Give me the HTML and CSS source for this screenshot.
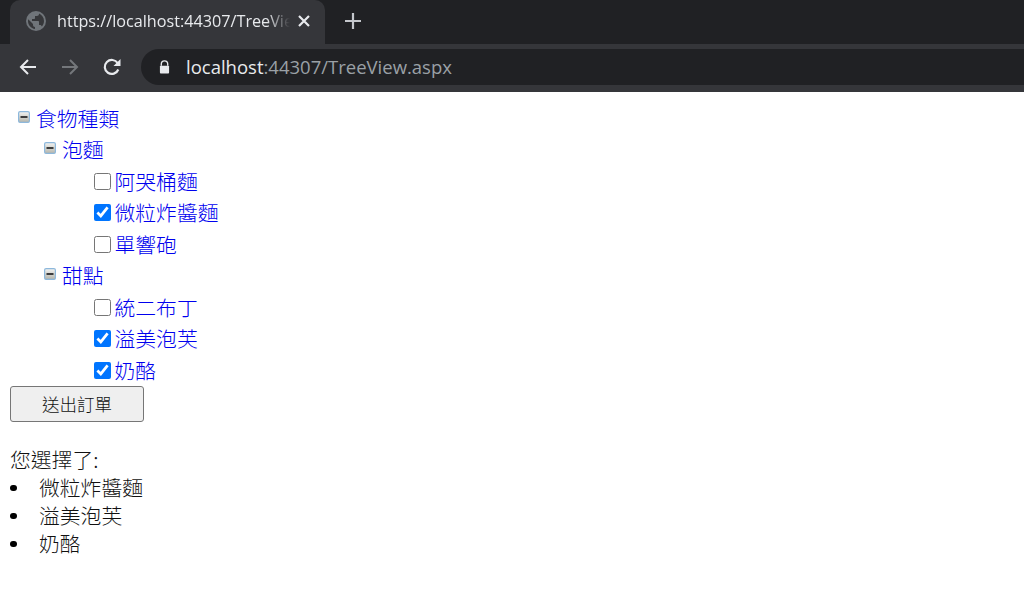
FILE: index.html
```html
<!DOCTYPE html>
<html lang="zh-Hant">
<head>
<meta charset="utf-8">
<title>TreeView</title>
<link rel="stylesheet" href="styles.css">
</head>
<body>
<header class="chrome">
  <div class="tabstrip">
    <div class="tab">
      <svg class="globe" width="20" height="20" viewBox="0 0 20 20"><circle cx="10" cy="10" r="10" fill="#70757a"/><path d="M9 18c-4-.5-7-3.900-7-8 0-.6.1-1.200.2-1.800L7 13v1c0 1.100.9 2 2 2v2zm6.900-2.500c-.3-.8-1-1.500-1.900-1.500h-1v-3c0-.6-.4-1-1-1H6V8h2c.6 0 1-.4 1-1V5h2c1.100 0 2-.9 2-2v-.4c2.900 1.200 5 4 5 7.400 0 2.100-.8 4-2.100 5.500z" fill="#36373a"/></svg>
      <span class="tab-title">https://localhost:44307/TreeVie</span>
      <svg class="tab-close" width="14" height="14" viewBox="0 0 14 14"><path d="M2 2l10 10M12 2L2 12" stroke="#e8eaed" stroke-width="2.200" fill="none"/></svg>
    </div>
    <svg class="newtab" width="16" height="16" viewBox="0 0 16 16"><path d="M8 0v16M0 8h16" stroke="#c4c7cc" stroke-width="2.200" fill="none"/></svg>
  </div>
  <div class="toolbar">
    <svg class="nav" width="20" height="20" viewBox="0 0 20 20"><path d="M18 10H3M10 3l-7 7 7 7" stroke="#e8eaed" stroke-width="2" fill="none"/></svg>
    <svg class="nav" width="20" height="20" viewBox="0 0 20 20"><path d="M2 10h15M10 3l7 7-7 7" stroke="#74777b" stroke-width="2" fill="none"/></svg>
    <svg class="nav" width="20" height="20" viewBox="0 0 20 20"><path d="M16.300 12.500a7 7 0 1 1-.6-6.300" stroke="#e8eaed" stroke-width="2.200" fill="none"/><path d="M18.500 2v7h-7z" fill="#e8eaed"/></svg>
    <div class="omnibox">
      <svg class="lock" width="11" height="14" viewBox="0 0 12 15"><path d="M2.500 6V4.300a3.500 3.500 0 0 1 7 0V6" stroke="#e8eaed" stroke-width="1.500" fill="none"/><rect x="1" y="6" width="10" height="8.500" rx="1" fill="#e8eaed"/></svg>
      <span class="url"><span class="host">localhost</span>:44307/TreeView.aspx</span>
    </div>
  </div>
</header>
<main class="page">
  <div class="tree">
    <div class="node level0"><svg class="toggle" width="12" height="12" viewBox="0 0 12 12"><use href="#minus"/></svg><a class="label" href="#">食物種類</a></div>
    <div class="node level1"><svg class="toggle" width="12" height="12" viewBox="0 0 12 12"><use href="#minus"/></svg><a class="label" href="#">泡麵</a></div>
    <div class="node level2"><input type="checkbox" class="check"><a class="label" href="#">阿哭桶麵</a></div>
    <div class="node level2"><input type="checkbox" class="check" checked><a class="label" href="#">微粒炸醬麵</a></div>
    <div class="node level2"><input type="checkbox" class="check"><a class="label" href="#">單響砲</a></div>
    <div class="node level1"><svg class="toggle" width="12" height="12" viewBox="0 0 12 12"><use href="#minus"/></svg><a class="label" href="#">甜點</a></div>
    <div class="node level2"><input type="checkbox" class="check"><a class="label" href="#">統二布丁</a></div>
    <div class="node level2"><input type="checkbox" class="check" checked><a class="label" href="#">溢美泡芙</a></div>
    <div class="node level2"><input type="checkbox" class="check" checked><a class="label" href="#">奶酪</a></div>
  </div>
  <button class="submit" type="button">送出訂單</button>
  <p class="result">您選擇了:</p>
  <ul class="picked">
    <li>微粒炸醬麵</li>
    <li>溢美泡芙</li>
    <li>奶酪</li>
  </ul>
</main>
<svg class="defs" width="0" height="0"><defs>
  <linearGradient id="mg" x1="0" y1="0" x2="0" y2="1"><stop offset="0" stop-color="#f4f4f2"/><stop offset="1" stop-color="#b4b4aa"/></linearGradient>
  <g id="minus"><rect x=".6" y=".6" width="10.800" height="10.800" rx="1.500" fill="url(#mg)" stroke="#8db8dc" stroke-width="1.200"/><rect x="2.500" y="5" width="7" height="2" fill="#3c3c3c"/></g>
</defs></svg>
</body>
</html>
```
FILE: styles.css
```css
html, body { margin: 0; padding: 0; background: #fff; }
body { font-family: "Noto Sans CJK TC", "Liberation Sans", sans-serif; color: #111; overflow: hidden; }
.defs { position: absolute; }
.chrome { background: #202124; }
.tabstrip { height: 44px; display: flex; align-items: center; padding-left: 10px; }
.tab { width: 315px; height: 44px; box-sizing: border-box; background: #35363a; border-radius: 10px 10px 0 0; display: flex; align-items: center; padding: 0 14px 2px 16px; }
.globe { flex: none; }
.tab-title { flex: 1; min-width: 0; margin-left: 11px; color: #e8eaed; font: 16.200px/22px "Open Sans", sans-serif; white-space: nowrap; -webkit-mask-image: linear-gradient(to right, #000 90%, transparent 100%); mask-image: linear-gradient(to right, #000 90%, transparent 100%); }
.tab-close { flex: none; margin-left: 7px; }
.newtab { margin: 0 0 2px 20px; }
.toolbar { height: 48px; box-sizing: border-box; background: #35363a; display: flex; align-items: center; padding: 5px 0 7px 18px; gap: 22px; }
.nav { flex: none; }
.omnibox { flex: 1; align-self: stretch; margin-left: -3px; background: #202124; border-radius: 18px 0 0 18px; display: flex; align-items: center; padding-left: 18px; }
.lock { flex: none; }
.url { margin-left: 16px; color: #9aa0a6; font: 18.500px/24px "Open Sans", sans-serif; white-space: nowrap; }
.host { color: #e8eaed; }
.page { padding: 10.500px 10px 0; }
.node { height: 31.500px; display: flex; align-items: center; }
.label { color: #0000ee; font-size: 20.800px; font-weight: 300; line-height: 31.500px; text-decoration: none; }
.toggle { flex: none; margin: -3px 6px 0 0; }
.level0 { padding-left: 8px; }
.level1 { padding-left: 34px; }
.level2 { padding-left: 83.500px; }
.check { width: 17px; height: 17px; margin: 0 4px 0 0; flex: none; }
.submit { display: block; width: 134px; height: 36px; margin: 0; padding: 0; background: #efefef; border: 1px solid #767676; border-radius: 3px; color: #111; font: 300 17.500px/1 "Noto Sans CJK TC", sans-serif; }
.result { margin: 23px 0 0 0; font-size: 20.800px; font-weight: 300; line-height: 28px; }
.picked { margin: 0; padding: 0; list-style: none; font-size: 20.800px; font-weight: 300; line-height: 28px; }
.picked li { display: flex; align-items: center; gap: 22.500px; }
.picked li::before { content: ""; flex: none; width: 6.500px; height: 6.500px; margin-top: 2px; border-radius: 50%; background: #000; }
```
